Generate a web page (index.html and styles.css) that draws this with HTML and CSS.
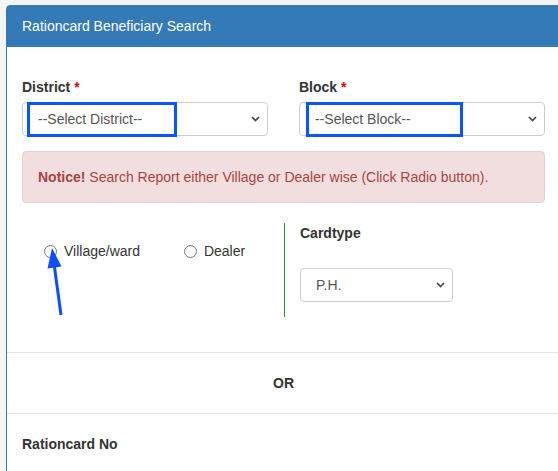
FILE: index.html
```html
<!DOCTYPE html>
<html lang="en">
<head>
  <meta charset="UTF-8" />
  <title>Rationcard Beneficiary Search</title>
  <link rel="stylesheet" href="styles.css">
</head>
<body>
  <div class="panel">
    <div class="panel-heading">Rationcard Beneficiary Search</div>

    <div class="panel-body">
      <div class="row">
        <div class="field">
          <label>District <span class="req">*</span></label>
          <div class="select-wrap">
            <select class="form-control">
              <option>--Select District--</option>
            </select>
            <span class="mark mark-district"></span>
          </div>
        </div>
        <div class="field">
          <label>Block <span class="req">*</span></label>
          <div class="select-wrap">
            <select class="form-control">
              <option>--Select Block--</option>
            </select>
            <span class="mark mark-block"></span>
          </div>
        </div>
      </div>

      <div class="alert"><b>Notice!</b> Search Report either Village or Dealer wise (Click Radio button).</div>

      <div class="filter-row">
        <div class="radio-col">
          <label class="radio-inline"><input type="radio" name="mode" /> Village/ward</label>
          <label class="radio-inline dealer"><input type="radio" name="mode" /> Dealer</label>
          <!-- annotation arrow -->
          <svg class="arrow" width="60" height="100" viewBox="0 0 60 100">
            <line x1="32.5" y1="44" x2="39" y2="92" stroke="#0d4fff" stroke-width="3" />
            <polygon points="30,25 25.5,45.5 39.5,43.5" fill="#0d4fff" />
          </svg>
        </div>
        <div class="card-col">
          <label>Cardtype</label>
          <select class="form-control card-select">
            <option>P.H.</option>
          </select>
        </div>
      </div>
    </div>

    <div class="or-row">OR</div>

    <div class="search-row">
      <label>Rationcard No</label>
    </div>
  </div>
</body>
</html>
```

FILE: styles.css
```css
html, body {
  margin: 0;
  overflow: hidden;
}
body {
  background-color: #f5f5f5;
  padding: 5px 0 0 6px;
  font-family: "Liberation Sans", Arial, sans-serif;
  font-size: 14px;
  line-height: 20px;
  color: #333;
}
.panel {
  box-sizing: border-box;
  width: 555px;
  background: #fff;
  border: 1px solid #337ab7;
  border-radius: 4px 0 0 0;
}
.panel-heading {
  background-color: #337ab7;
  color: #fff;
  padding: 12px 15px 13px;
  line-height: 16px;
}
.panel-body {
  padding: 30px 15px 35px;
}
label {
  display: block;
  font-weight: bold;
  margin-bottom: 5px;
}
.req {
  color: #e00000;
}
.row {
  display: grid;
  grid-template-columns: 1fr 1fr;
  gap: 31px;
}
.select-wrap {
  position: relative;
}
.form-control {
  display: block;
  box-sizing: border-box;
  width: 100%;
  height: 34px;
  margin: 0;
  padding: 0 24px 0 15px;
  border: 1px solid #ccc;
  border-radius: 4px;
  background: #fff url("data:image/svg+xml;utf8,<svg xmlns='http://www.w3.org/2000/svg' width='9' height='6' viewBox='0 0 9 6'><path d='M1 1l3.5 3.5L8 1' fill='none' stroke='%23444' stroke-width='1.7'/></svg>") no-repeat right 7px center;
  -webkit-appearance: none;
  appearance: none;
  font-family: inherit;
  font-size: 14px;
  color: #555;
}
.mark {
  position: absolute;
  top: 0;
  height: 35px;
  box-sizing: border-box;
  border: 3px solid #0b55ff;
  pointer-events: none;
}
.mark-district {
  left: 5px;
  width: 150px;
}
.mark-block {
  left: 7px;
  width: 157px;
}
.alert {
  margin: 15px 0 20px;
  padding: 15px;
  background-color: #f2dede;
  border: 1px solid #ebccd1;
  border-radius: 4px;
  color: #a94442;
}
.filter-row {
  display: grid;
  grid-template-columns: 262px 1fr;
}
.radio-col {
  position: relative;
  padding: 18px 0 0 22px;
}
.radio-inline {
  display: inline-flex;
  align-items: center;
  gap: 7px;
  font-weight: normal;
  margin: 0;
}
.radio-inline.dealer {
  margin-left: 40px;
}
.radio-inline input {
  -webkit-appearance: none;
  appearance: none;
  width: 13px;
  height: 13px;
  margin: 0;
  border: 1px solid #767676;
  border-radius: 50%;
  background: #fff;
}
.arrow {
  position: absolute;
  left: 0;
  top: 0;
}
.card-col {
  border-left: 1px solid #1f8a3f;
  padding: 0 15px 15px;
}
.card-col label {
  margin-bottom: 25px;
}
.card-select {
  width: 153px;
}
.or-row {
  border-top: 1px solid #e5e5e5;
  padding: 20px 0;
  text-align: center;
  font-weight: bold;
}
.search-row {
  border-top: 1px solid #e5e5e5;
  padding: 20px 15px 60px;
}
```
